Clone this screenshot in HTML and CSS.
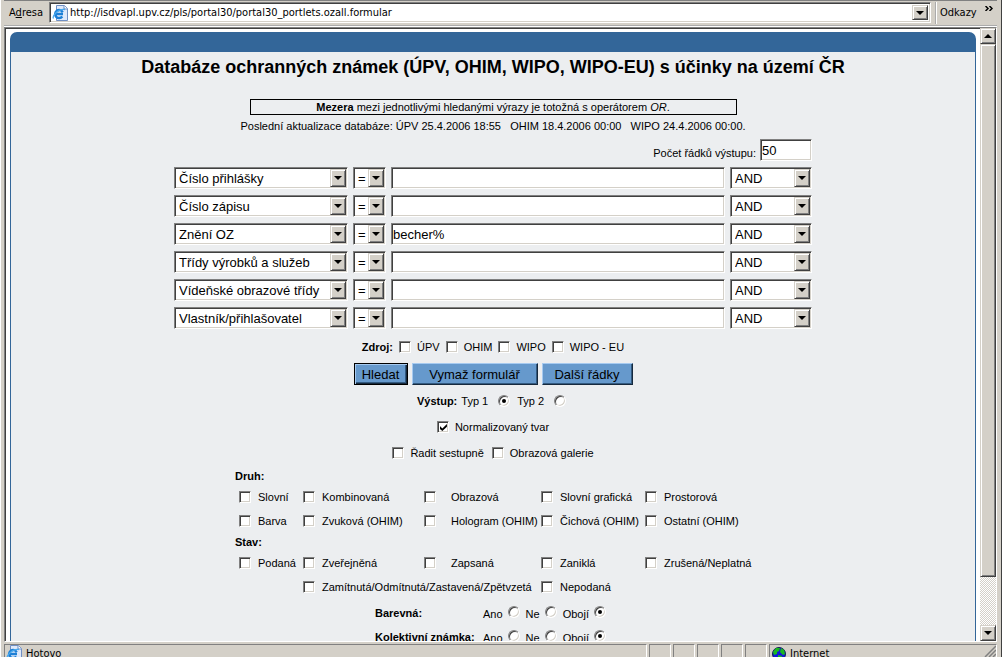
FILE: index.html
```html
<!DOCTYPE html>
<html lang="cs">
<head>
<meta charset="utf-8">
<title>Databáze ochranných známek</title>
<link rel="stylesheet" href="styles.css">
</head>
<body>
<div class="window">
  <header class="address-bar">
    <label class="address-label" for="url">A<u>d</u>resa</label>
    <div class="address-box sunken">
      <svg class="ie-icon" viewBox="0 0 16 16" aria-hidden="true">
        <path d="M4.500 .5h8l3 3v12h-11z" fill="#dfe9fa" stroke="#6f8fc4"/>
        <path d="M12 .5v3.500h3.500" fill="#fff" stroke="#6f8fc4"/>
        <path d="M11 9H3.500M10.700 7.200a4 4 0 1 0-.4 4.300" fill="none" stroke="#1c7fd6" stroke-width="2.400"/>
        <path d="M1.500 13.500C0 11 6 3.500 13 4.500" fill="none" stroke="#49a9ee" stroke-width="1.300"/>
      </svg>
      <input id="url" class="address-input" type="text" value="http://isdvapl.upv.cz/pls/portal30/portal30_portlets.ozall.formular">
      <button class="drop" type="button" aria-label="Historie adres"><i class="tri"></i></button>
    </div>
    <div class="links">
      <span>Odkazy</span>
      <svg class="chevrons" viewBox="0 0 8 5" aria-hidden="true"><path d="M0.500 0l2.500 2.500-2.500 2.500M4.500 0l2.500 2.500-2.500 2.500" fill="none" stroke="#000" stroke-width="1.500"/></svg>
    </div>
  </header>

  <div class="viewport">
    <main class="page">
      <form class="panel">
        <h1>Databáze ochranných známek (ÚPV, OHIM, WIPO, WIPO-EU) s účinky na území ČR</h1>
        <p class="note"><b>Mezera</b> mezi jednotlivými hledanými výrazy je totožná s operátorem <em>OR</em>.</p>
        <p class="updated">Poslední aktualizace databáze: ÚPV 25.4.2006 18:55 &nbsp; OHIM 18.4.2006 00:00 &nbsp; WIPO 24.4.2006 00:00.</p>

        <div class="count">
          <label for="rows">Počet řádků výstupu:</label>
          <input id="rows" class="field sunken" type="text" value="50">
        </div>

        <div class="criteria">
          <span class="select sunken"><select aria-label="Pole 1"><option>Číslo přihlášky</option></select><span class="drop"><i class="tri"></i></span></span>
          <span class="select sunken"><select aria-label="Operátor 1"><option>=</option></select><span class="drop"><i class="tri"></i></span></span>
          <input class="field sunken" type="text" aria-label="Hodnota 1">
          <span class="select sunken"><select aria-label="Spojka 1"><option>AND</option></select><span class="drop"><i class="tri"></i></span></span>

          <span class="select sunken"><select aria-label="Pole 2"><option>Číslo zápisu</option></select><span class="drop"><i class="tri"></i></span></span>
          <span class="select sunken"><select aria-label="Operátor 2"><option>=</option></select><span class="drop"><i class="tri"></i></span></span>
          <input class="field sunken" type="text" aria-label="Hodnota 2">
          <span class="select sunken"><select aria-label="Spojka 2"><option>AND</option></select><span class="drop"><i class="tri"></i></span></span>

          <span class="select sunken"><select aria-label="Pole 3"><option>Znění OZ</option></select><span class="drop"><i class="tri"></i></span></span>
          <span class="select sunken"><select aria-label="Operátor 3"><option>=</option></select><span class="drop"><i class="tri"></i></span></span>
          <input class="field sunken" type="text" aria-label="Hodnota 3" value="becher%">
          <span class="select sunken"><select aria-label="Spojka 3"><option>AND</option></select><span class="drop"><i class="tri"></i></span></span>

          <span class="select sunken"><select aria-label="Pole 4"><option>Třídy výrobků a služeb</option></select><span class="drop"><i class="tri"></i></span></span>
          <span class="select sunken"><select aria-label="Operátor 4"><option>=</option></select><span class="drop"><i class="tri"></i></span></span>
          <input class="field sunken" type="text" aria-label="Hodnota 4">
          <span class="select sunken"><select aria-label="Spojka 4"><option>AND</option></select><span class="drop"><i class="tri"></i></span></span>

          <span class="select sunken"><select aria-label="Pole 5"><option>Vídeňské obrazové třídy</option></select><span class="drop"><i class="tri"></i></span></span>
          <span class="select sunken"><select aria-label="Operátor 5"><option>=</option></select><span class="drop"><i class="tri"></i></span></span>
          <input class="field sunken" type="text" aria-label="Hodnota 5">
          <span class="select sunken"><select aria-label="Spojka 5"><option>AND</option></select><span class="drop"><i class="tri"></i></span></span>

          <span class="select sunken"><select aria-label="Pole 6"><option>Vlastník/přihlašovatel</option></select><span class="drop"><i class="tri"></i></span></span>
          <span class="select sunken"><select aria-label="Operátor 6"><option>=</option></select><span class="drop"><i class="tri"></i></span></span>
          <input class="field sunken" type="text" aria-label="Hodnota 6">
          <span class="select sunken"><select aria-label="Spojka 6"><option>AND</option></select><span class="drop"><i class="tri"></i></span></span>
        </div>

        <div class="line source">
          <b>Zdroj:</b>
          <label class="opt"><input type="checkbox">ÚPV</label>
          <label class="opt"><input type="checkbox">OHIM</label>
          <label class="opt"><input type="checkbox">WIPO</label>
          <label class="opt"><input type="checkbox">WIPO - EU</label>
        </div>

        <div class="buttons">
          <button class="btn btn-default" type="button">Hledat</button>
          <button class="btn btn-wide" type="button">Vymaž formulář</button>
          <button class="btn btn-more" type="button">Další řádky</button>
        </div>

        <div class="line output">
          <b>Výstup:</b>
          <label class="opt">Typ 1<input type="radio" name="typ" checked></label>
          <label class="opt">Typ 2<input type="radio" name="typ"></label>
        </div>
        <div class="line"><label class="opt"><input type="checkbox" checked>Normalizovaný tvar</label></div>
        <div class="line">
          <label class="opt"><input type="checkbox">Řadit sestupně</label>
          <label class="opt"><input type="checkbox">Obrazová galerie</label>
        </div>

        <div class="facets">
          <h2>Druh:</h2>
          <div class="facet-grid">
            <label class="opt"><input type="checkbox">Slovní</label>
            <label class="opt"><input type="checkbox">Kombinovaná</label>
            <label class="opt spaced"><input type="checkbox">Obrazová</label>
            <label class="opt"><input type="checkbox">Slovní grafická</label>
            <label class="opt"><input type="checkbox">Prostorová</label>
            <label class="opt"><input type="checkbox">Barva</label>
            <label class="opt"><input type="checkbox">Zvuková (OHIM)</label>
            <label class="opt spaced"><input type="checkbox">Hologram (OHIM)</label>
            <label class="opt"><input type="checkbox">Čichová (OHIM)</label>
            <label class="opt"><input type="checkbox">Ostatní (OHIM)</label>
          </div>
          <h2>Stav:</h2>
          <div class="facet-grid">
            <label class="opt"><input type="checkbox">Podaná</label>
            <label class="opt"><input type="checkbox">Zveřejněná</label>
            <label class="opt spaced"><input type="checkbox">Zapsaná</label>
            <label class="opt"><input type="checkbox">Zaniklá</label>
            <label class="opt"><input type="checkbox">Zrušená/Neplatná</label>
            <label class="opt two-cols"><input type="checkbox">Zamítnutá/Odmítnutá/Zastavená/Zpětvzetá</label>
            <label class="opt"><input type="checkbox">Nepodaná</label>
          </div>
        </div>

        <div class="flags">
          <b>Barevná:</b>
          <div class="choices">
            <label>Ano<input type="radio" name="barevna"></label>
            <label>Ne<input type="radio" name="barevna"></label>
            <label>Obojí<input type="radio" name="barevna" checked></label>
          </div>
          <b>Kolektivní známka:</b>
          <div class="choices">
            <label>Ano<input type="radio" name="kolektivni"></label>
            <label>Ne<input type="radio" name="kolektivni"></label>
            <label>Obojí<input type="radio" name="kolektivni" checked></label>
          </div>
        </div>
      </form>
    </main>
    <div class="scrollbar">
      <button class="drop" type="button" aria-label="Nahoru"><i class="tri up"></i></button>
      <div class="thumb raised"></div>
      <div class="track"></div>
      <button class="drop" type="button" aria-label="Dolů"><i class="tri"></i></button>
    </div>
  </div>

  <footer class="status-bar">
    <div class="pane pane-main">
      <svg class="ie-icon" viewBox="0 0 16 16" aria-hidden="true">
        <path d="M4.500 .5h8l3 3v12h-11z" fill="#dfe9fa" stroke="#6f8fc4"/>
        <path d="M12 .5v3.500h3.500" fill="#fff" stroke="#6f8fc4"/>
        <path d="M11 9H3.500M10.700 7.200a4 4 0 1 0-.4 4.300" fill="none" stroke="#1c7fd6" stroke-width="2.400"/>
        <path d="M1.500 13.500C0 11 6 3.500 13 4.500" fill="none" stroke="#49a9ee" stroke-width="1.300"/>
      </svg>
      <span>Hotovo</span>
    </div>
    <div class="pane"></div>
    <div class="pane"></div>
    <div class="pane"></div>
    <div class="pane"></div>
    <div class="pane"></div>
    <div class="pane pane-zone">
      <svg class="globe" viewBox="0 0 14 14" aria-hidden="true">
        <circle cx="7" cy="7" r="6.500" fill="#1018d8" stroke="#102050"/>
        <path d="M1 5l3-4 4 0-1 3-2 1 0 2-3 1zM9 1l3 2 1 4-2 1-3-3zM6 8l4 1-1 4-3-1z" fill="#19b81f"/>
      </svg>
      <span>Internet</span>
      <svg class="grip" viewBox="0 0 12 12" aria-hidden="true"><path d="M1 12L12 1M5 12l7-7M9 12l3-3" stroke="#808080" stroke-width="1.500"/></svg>
    </div>
  </footer>
</div>
</body>
</html>
```

FILE: styles.css
```css
* {
  box-sizing: border-box;
}

body {
  margin: 0;
  background: #d4d0c8;
  color: #000;
  font: 11px/14px "Liberation Sans", Arial, sans-serif;
}

h1, h2, p {
  margin: 0;
}

input, select, button {
  margin: 0;
  font-family: inherit;
  color: inherit;
}

.window {
  display: flex;
  flex-direction: column;
  height: 100vh;
  padding: 0 4px;
  overflow: hidden;
  border-right: 1px solid #404040;
  box-shadow: inset 2px 0 0 -1px #fff;
}

/* Bevels */
.sunken {
  border: 1px solid;
  border-color: #808080 #fff #fff #808080;
  box-shadow: inset 1px 1px 0 #404040, inset -1px -1px 0 #d4d0c8;
}

.raised, .drop {
  background: #d4d0c8;
  border: 1px solid;
  border-color: #d4d0c8 #404040 #404040 #d4d0c8;
  box-shadow: inset 1px 1px 0 #fff, inset -1px -1px 0 #808080;
}

.drop {
  display: flex;
  align-items: center;
  justify-content: center;
  flex: none;
  width: 16px;
  padding: 0;
}

.tri {
  border: solid transparent;
  border-width: 4px 4px 0;
  border-top-color: #000;
}

.tri.up {
  border-width: 0 4px 4px;
  border-bottom-color: #000;
}

/* Browser chrome */
.address-bar {
  display: flex;
  align-items: center;
  flex: none;
  height: 27px;
  padding: 1px 0 2px;
  border-top: 1px solid #808080;
  border-bottom: 2px groove #fff;
  font-family: "DejaVu Sans Condensed", "DejaVu Sans", sans-serif;
}

.address-label {
  width: 45px;
  padding-left: 5px;
}

.address-box {
  display: flex;
  align-items: center;
  flex: 1;
  height: 21px;
  padding: 2px;
  background: #fff;
}

.ie-icon {
  flex: none;
  width: 16px;
  height: 16px;
}

.address-input {
  flex: 1;
  padding: 0 0 0 2px;
  border: 0;
  background: none;
  font-size: 11px;
  outline: 0;
}

.address-box .drop {
  align-self: stretch;
}

.links {
  display: flex;
  justify-content: space-between;
  width: 62px;
  height: 22px;
  margin-left: 4px;
  padding: 4px 4px 0 3px;
  border-left: 2px groove #fff;
}

.chevrons {
  width: 8px;
  height: 5px;
}

.viewport {
  display: flex;
  flex: 1;
  min-height: 0;
  background: #fff;
  border: 1px solid;
  border-color: #808080 #fff #fff #808080;
}

.page {
  flex: 1;
  padding: 4px 4px 0 5px;
  overflow: hidden;
  box-shadow: inset 1px 1px 0 #404040;
}

.scrollbar {
  display: flex;
  flex-direction: column;
  width: 16px;
}

.scrollbar .drop {
  height: 16px;
}

.thumb {
  flex: 11;
}

.track {
  flex: 1;
  background: repeating-conic-gradient(#fff 0 25%, #d4d0c8 0 50%) 0 0 / 2px 2px;
}

.status-bar {
  display: flex;
  gap: 2px;
  flex: none;
  height: 15px;
  padding-top: 2px;
  overflow: hidden;
  font-family: "DejaVu Sans Condensed", "DejaVu Sans", sans-serif;
}

.pane {
  display: flex;
  gap: 4px;
  width: 22px;
  height: 20px;
  border: 1px solid;
  border-color: #808080 #fff #fff #808080;
}

.pane span {
  padding-top: 2px;
}

.pane-main {
  flex: 1;
  padding-left: 1px;
}

.pane-zone {
  width: 228px;
  padding-left: 2px;
}

.globe {
  width: 14px;
  height: 14px;
  margin-top: 2px;
}

.grip {
  width: 12px;
  height: 12px;
  margin-left: auto;
}

/* Search form */
.panel {
  display: flex;
  flex-direction: column;
  align-items: center;
  min-height: 100%;
  border: 1px solid #336699;
  border-top-width: 20px;
  border-radius: 7px 7px 0 0;
  background: #eceef0;
}

h1 {
  margin-top: 4px;
  font-size: 18px;
  line-height: 22px;
}

.note {
  width: 487px;
  margin-top: 21px;
  border: 1px solid #000;
  text-align: center;
}

.updated {
  margin-top: 4px;
}

.count {
  display: flex;
  justify-content: flex-end;
  align-items: center;
  gap: 4px;
  width: 638px;
  margin: 6px 0;
}

.count label {
  padding-top: 6px;
}

.field {
  height: 22px;
  padding: 0 1px;
  border-radius: 0;
  background: #fff;
  font-size: 13px;
  outline: 0;
}

.count .field {
  width: 52px;
}

.criteria {
  display: grid;
  grid-template-columns: 174px 33px 334px 82px;
  gap: 6px 5px;
}

.criteria .field {
  width: 100%;
}

.select {
  display: flex;
  height: 22px;
  padding: 1px;
  background: #fff;
}

.select select {
  flex: 1;
  min-width: 0;
  padding: 0 0 0 3px;
  border: 0;
  background: none;
  appearance: none;
  font-size: 13px;
  outline: 0;
}

.line {
  display: flex;
  align-items: center;
  justify-content: center;
  gap: 8px;
  height: 26px;
}

.source {
  gap: 6px;
  margin: 5px 0 3px;
}

.opt {
  display: flex;
  align-items: center;
  gap: 7px;
  white-space: nowrap;
}

.line .opt {
  gap: 6px;
}

.output {
  gap: 4px;
  margin-top: 3px;
}

.output .opt {
  gap: 10px;
  padding-right: 3px;
}

input[type="checkbox"], input[type="radio"] {
  flex: none;
  width: 12px;
  height: 12px;
  appearance: none;
  background: #fff;
  border: 1px solid;
  border-color: #808080 #fff #fff #808080;
  box-shadow: inset 1px 1px 0 #404040, inset -1px -1px 0 #d4d0c8;
}

input[type="checkbox"]:checked::before {
  content: "";
  display: block;
  width: 7px;
  height: 7px;
  margin: 2px 0 0 2px;
  background: #000;
  clip-path: polygon(0 30%, 35% 65%, 100% 0, 100% 40%, 35% 100%, 0 70%);
}

input[type="radio"] {
  border-radius: 50%;
}

input[type="radio"]:checked::before {
  content: "";
  display: block;
  width: 4px;
  height: 4px;
  margin: 3px;
  border-radius: 50%;
  background: #000;
}

.buttons {
  display: flex;
  gap: 4px;
}

.btn {
  height: 22px;
  padding: 0;
  border: 1px solid;
  border-color: #a6caf0 #16293d #16293d #a6caf0;
  box-shadow: inset -1px -1px 0 #335a80;
  background: #6699cc;
  font-size: 13px;
}

.btn-default {
  width: 54px;
  border-color: #000;
  box-shadow: inset 1px 1px 0 #a6caf0, inset -1px -1px 0 #16293d, inset -2px -2px 0 #335a80;
}

.btn-wide {
  width: 126px;
}

.btn-more {
  width: 91px;
}

.facets {
  width: 516px;
  margin-top: 1px;
}

h2 {
  font-size: 11px;
  line-height: 18px;
}

.facet-grid {
  display: grid;
  grid-template-columns: 64px 121px 117px 104px 1fr;
  grid-auto-rows: 24px;
  padding-left: 4px;
}

.spaced {
  gap: 15px;
}

.two-cols {
  grid-column: 2 / span 2;
}

.flags {
  display: grid;
  grid-template-columns: 108px 128px;
  grid-auto-rows: 24px;
  align-items: center;
  margin-top: 2px;
}

.flags b {
  white-space: nowrap;
}

.choices {
  display: flex;
  gap: 6px;
}

.choices label {
  display: flex;
  gap: 5px;
  padding-top: 2px;
}

.choices input {
  margin-top: -1px;
}
```
